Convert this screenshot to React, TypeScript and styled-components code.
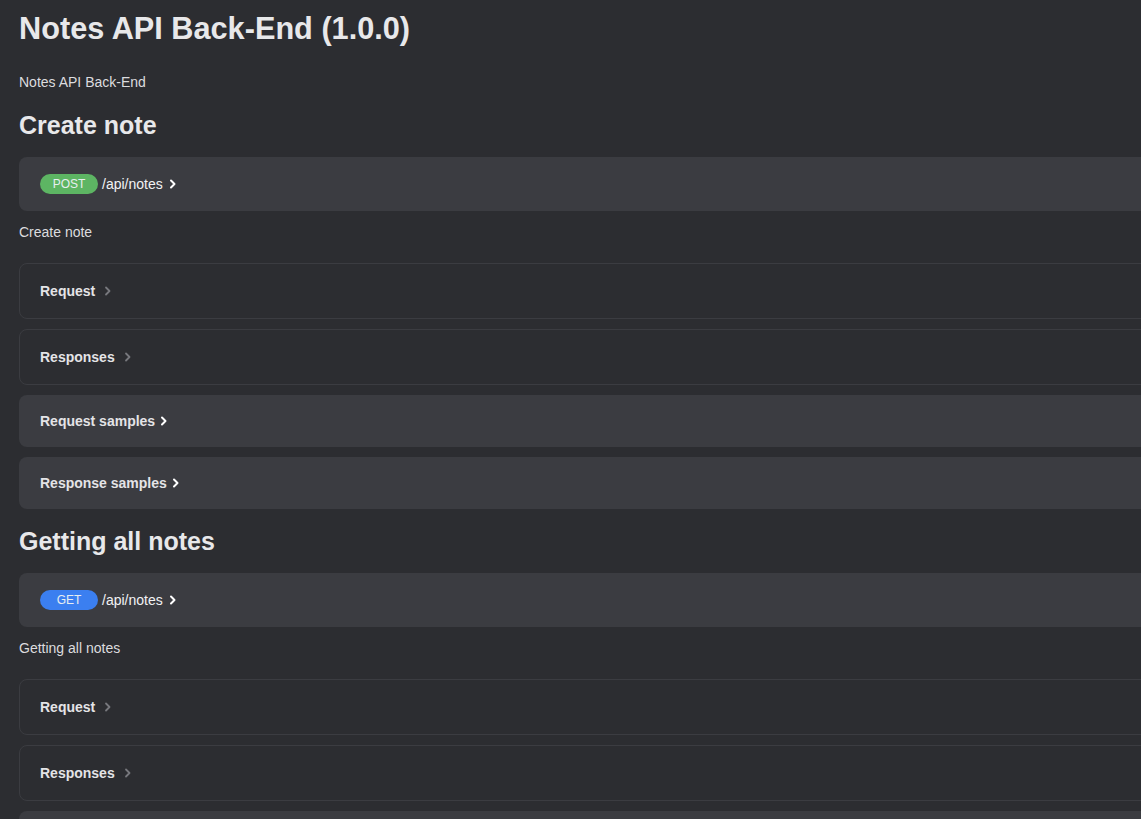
import React from "react";
import styled, { createGlobalStyle } from "styled-components";

const GlobalStyle = createGlobalStyle`
  html, body {
    margin: 0;
    padding: 0;
    background: #2c2d31;
    overflow: hidden;
  }
  body {
    font-family: "Liberation Sans", Arial, sans-serif;
    color: #e4e4e7;
  }
`;

const Page = styled.div`
  width: 1300px;
  padding: 10px 0 40px 19px;
  display: flex;
  flex-direction: column;
`;

const Title = styled.h1`
  margin: 0 0 25px;
  font-size: 30.7px;
  line-height: 37px;
  font-weight: 700;
  color: #e8e8ea;
`;

const Text = styled.p<{ $after?: number }>`
  margin: 0 0 ${(p) => p.$after ?? 0}px;
  font-size: 14px;
  line-height: 20px;
  color: #dcdcdf;
`;

const SectionTitle = styled.h2`
  margin: 0 0 17px;
  font-size: 25px;
  line-height: 30px;
  font-weight: 700;
  color: #e8e8ea;
`;

const Section = styled.section`
  display: flex;
  flex-direction: column;
  margin-bottom: 17px;
`;

const EndpointBar = styled.div`
  height: 54px;
  box-sizing: border-box;
  background: #3b3c41;
  border-radius: 8px;
  padding: 0 21px;
  display: flex;
  align-items: center;
  gap: 4px;
  margin-bottom: 11px;
`;

const Badge = styled.span<{ $color: string }>`
  display: inline-flex;
  align-items: center;
  justify-content: center;
  width: 58px;
  height: 20px;
  border-radius: 10px;
  background: ${(p) => p.$color};
  color: #e8eef0;
  font-size: 12px;
  line-height: 20px;
`;

const Path = styled.span`
  font-size: 14px;
  color: #f2f2f4;
  display: inline-flex;
  align-items: center;
  gap: 5px;
`;

const Panels = styled.div`
  display: flex;
  flex-direction: column;
  gap: 10px;
  margin-top: 21px;
`;

const Panel = styled.div<{ $filled?: boolean }>`
  box-sizing: border-box;
  height: ${(p) => (p.$filled ? 52 : 56)}px;
  border-radius: 8px;
  display: flex;
  align-items: center;
  gap: ${(p) => (p.$filled ? 4 : 8)}px;
  background: ${(p) => (p.$filled ? "#3b3c41" : "transparent")};
  border: ${(p) => (p.$filled ? "none" : "1px solid #3b3c41")};
  padding: 0 21px 0 ${(p) => (p.$filled ? 21 : 20)}px;
`;

const PanelLabel = styled.span`
  font-size: 14px;
  font-weight: 700;
  color: #e4e4e7;
`;

const ChevronSvg = styled.svg`
  flex: none;
  display: block;
`;

const Chevron = ({ color, weight }: { color: string; weight: number }) => (
  <ChevronSvg width="10" height="12" viewBox="0 0 10 12">
    <polyline
      points="3,2.5 6.5,6 3,9.5"
      fill="none"
      stroke={color}
      strokeWidth={weight}
      strokeLinecap="round"
      strokeLinejoin="round"
    />
  </ChevronSvg>
);

type Endpoint = {
  title: string;
  method: string;
  color: string;
  path: string;
  description: string;
};

const endpoints: Endpoint[] = [
  { title: "Create note", method: "POST", color: "#5db563", path: "/api/notes", description: "Create note" },
  { title: "Getting all notes", method: "GET", color: "#3b7ff0", path: "/api/notes", description: "Getting all notes" },
];

export default function App() {
  return (
    <>
      <GlobalStyle />
      <Page>
        <Title>Notes API Back-End (1.0.0)</Title>
        <Text $after={18}>Notes API Back-End</Text>
        {endpoints.map((e) => (
          <Section key={e.title}>
            <SectionTitle>{e.title}</SectionTitle>
            <EndpointBar>
              <Badge $color={e.color}>{e.method}</Badge>
              <Path>
                {e.path}
                <Chevron color="#ffffff" weight={2} />
              </Path>
            </EndpointBar>
            <Text>{e.description}</Text>
            <Panels>
              <Panel>
                <PanelLabel>Request</PanelLabel>
                <Chevron color="#77787d" weight={1.8} />
              </Panel>
              <Panel>
                <PanelLabel>Responses</PanelLabel>
                <Chevron color="#77787d" weight={1.8} />
              </Panel>
              <Panel $filled>
                <PanelLabel>Request samples</PanelLabel>
                <Chevron color="#ffffff" weight={2} />
              </Panel>
              <Panel $filled>
                <PanelLabel>Response samples</PanelLabel>
                <Chevron color="#ffffff" weight={2} />
              </Panel>
            </Panels>
          </Section>
        ))}
      </Page>
    </>
  );
}
